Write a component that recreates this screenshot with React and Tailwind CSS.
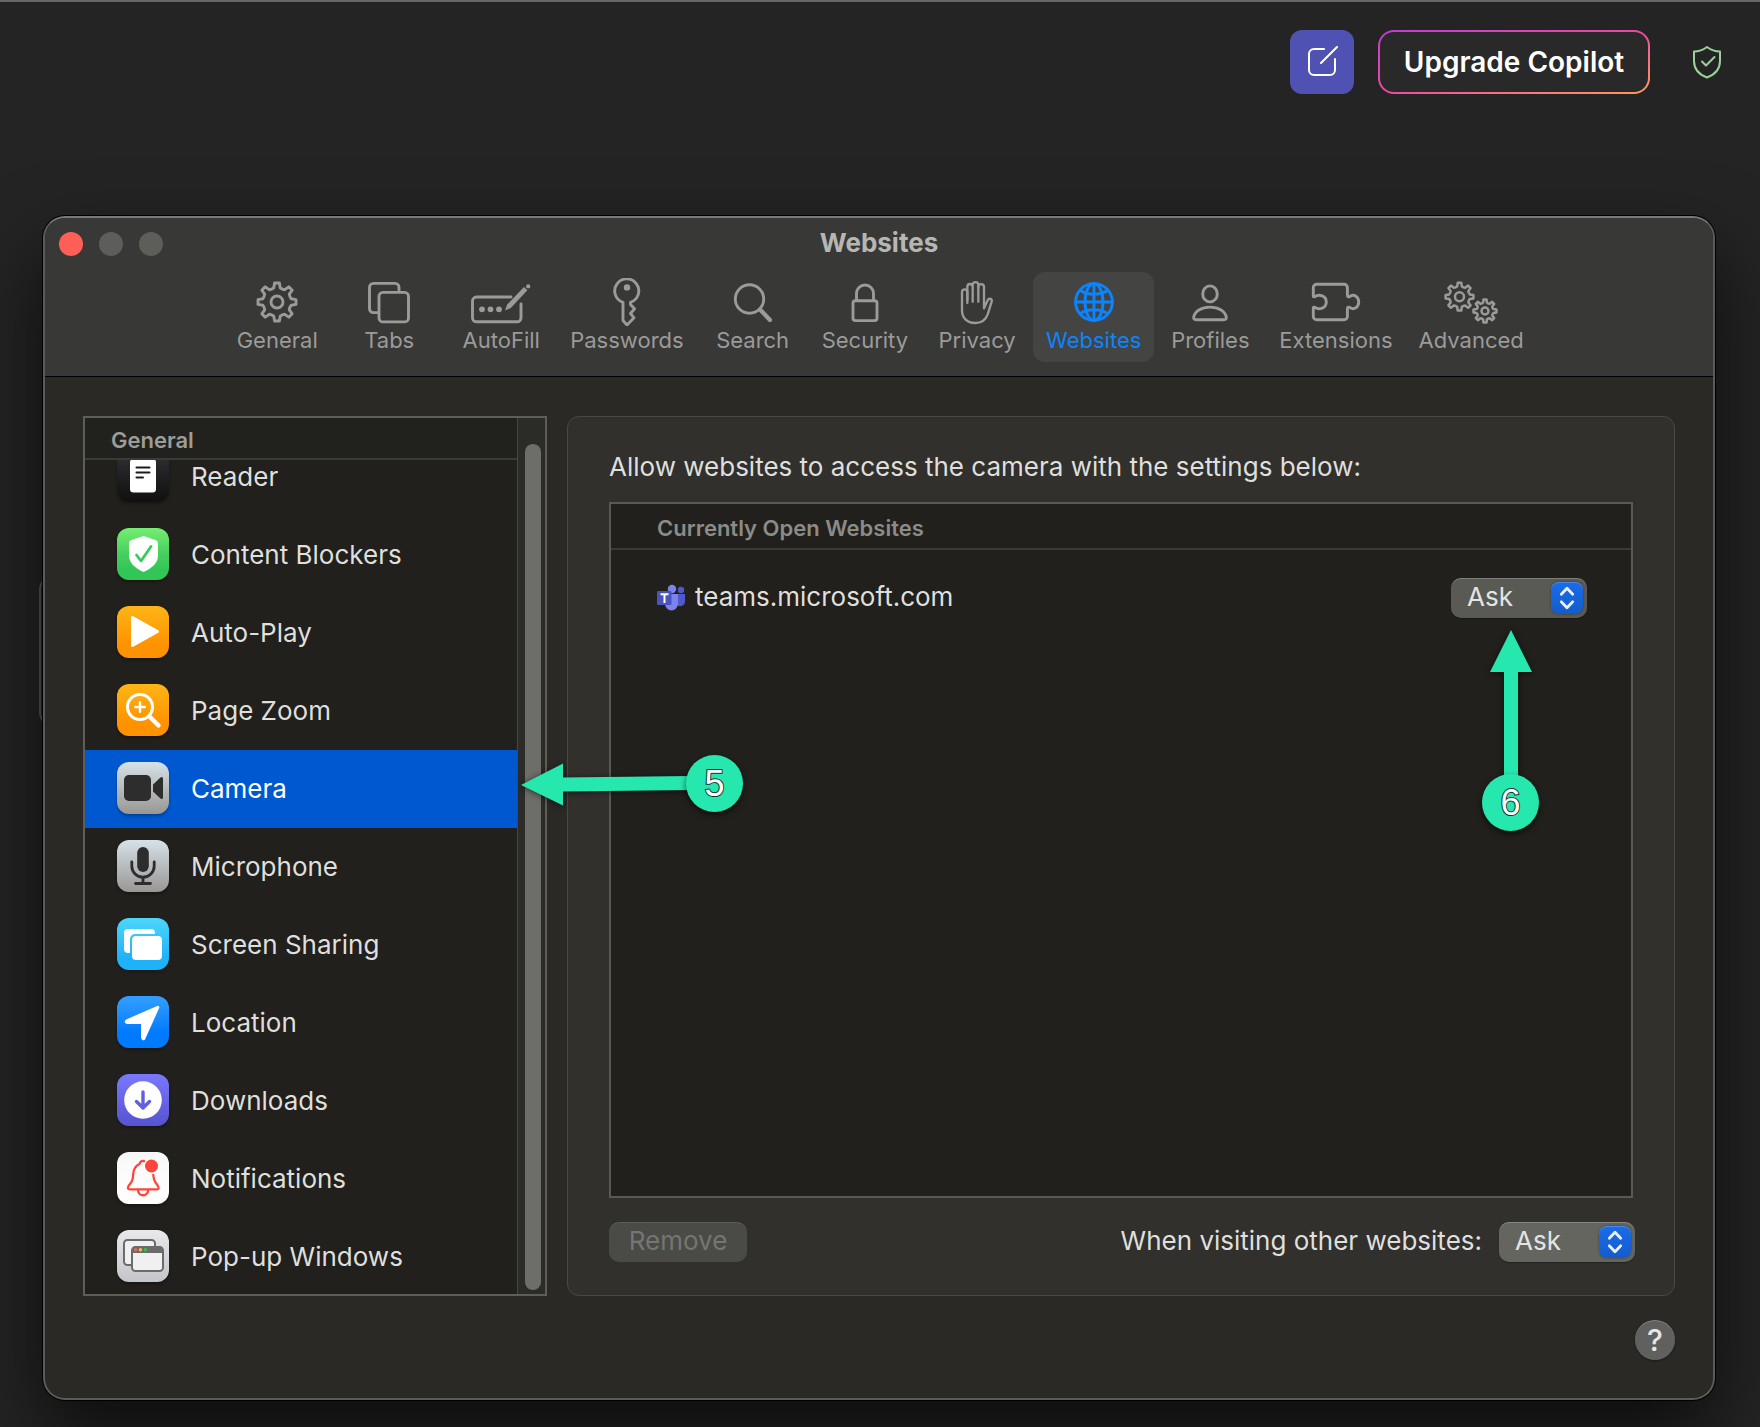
import { useState } from "react";

// outline of a cog centred on cx, cy
const cog = (cx, cy, outer, inner, teeth) => {
  const step = (Math.PI * 2) / teeth;
  const at = (r, a) => `${(cx + r * Math.sin(a)).toFixed(1)} ${(cy - r * Math.cos(a)).toFixed(1)}`;
  let d = "";

  for (let i = 0; i < teeth; i++) {
    const a = i * step;
    d += `${i ? "L" : "M"}${at(outer, a - step * 0.16)}L${at(outer, a + step * 0.16)}`;
    d += `L${at(inner, a + step * 0.28)}Q${at(inner - 1, a + step * 0.5)} ${at(inner, a + step * 0.72)}`;
  }
  return d + "Z";
};

const Line = ({ width, children }) => (
  <svg
    width={width}
    height="48"
    viewBox={`0 0 ${width} 48`}
    fill="none"
    stroke="currentColor"
    strokeWidth="2.9"
    strokeLinecap="round"
    strokeLinejoin="round"
    aria-hidden="true"
  >
    {children}
  </svg>
);

const tools = [
  {
    name: "General",
    icon: (
      <Line width={44}>
        <path d={cog(22, 24, 19.2, 14.6, 8)} />
        <circle cx="22" cy="24" r="6" />
      </Line>
    ),
  },
  {
    name: "Tabs",
    icon: (
      <Line width={42}>
        <path d="M9.5 34.6H5.5a4 4 0 0 1-4-4V9.4a4 4 0 0 1 4-4h21.5a4 4 0 0 1 4 4v3" />
        <rect x="11" y="14.4" width="29.5" height="29.5" rx="4" />
      </Line>
    ),
  },
  {
    name: "AutoFill",
    icon: (
      <Line width={60}>
        <path d="M40 19H5.5a4 4 0 0 0-4 4v16.800a4 4 0 0 0 4 4h40.500a4 4 0 0 0 4-4V26" />
        <path d="M34 32.500l2.200-6L53 9l3.400 3.200L39.800 30Z" fill="currentColor" stroke="none" />
        <circle cx="57.200" cy="8.400" r="2.100" fill="currentColor" stroke="none" />
        <g fill="currentColor" stroke="none">
          <circle cx="11" cy="31.300" r="2.900" />
          <circle cx="19.500" cy="31.300" r="2.900" />
          <circle cx="28" cy="31.300" r="2.900" />
        </g>
      </Line>
    ),
  },
  {
    name: "Passwords",
    icon: (
      <Line width={28}>
        <path d="M10 24.300A12 12 0 1 1 17.500 24.300V26.500l4 4.300-4 4.700 3.500 4.300-7 7.200-4-4.500Z" />
        <circle cx="14" cy="9.400" r="3.200" fill="currentColor" stroke="none" />
      </Line>
    ),
  },
  {
    name: "Search",
    icon: (
      <Line width={40}>
        <circle cx="16.500" cy="21" r="14.200" />
        <path d="M27 31.500L37 42" strokeWidth="4.200" />
      </Line>
    ),
  },
  {
    name: "Security",
    icon: (
      <Line width={28}>
        <rect x="2" y="22.800" width="24" height="19.800" rx="2.500" />
        <path d="M5.500 22.500V15.500a8.500 8.500 0 0 1 17 0v7" />
      </Line>
    ),
  },
  {
    name: "Privacy",
    icon: (
      <svg
        width="34"
        height="48"
        viewBox="1203 234 102 144"
        fill="none"
        stroke="currentColor"
        strokeWidth="7"
        strokeLinecap="round"
        strokeLinejoin="round"
        aria-hidden="true"
      >
        <path d="M1225 309V276a8 8 0 0 0-16 0v55c0 24 16 38 39 38 20 0 32-9 38-26l12-38c3-9-8-12-12-4l-11 24V261a8.500 8.500 0 0 0-17 0" />
        <path d="M1225 300V260a8 8 0 0 1 16 0v45M1241 258v-3a8.500 8.500 0 0 1 17 0v50" />
      </svg>
    ),
  },
  {
    name: "Websites",
    icon: (
      <Line width={42}>
        <circle cx="21" cy="24" r="18.400" />
        <ellipse cx="21" cy="24" rx="9" ry="18.400" />
        <path d="M21 5.400v37.200M2.400 24h37.200M7.500 12.500c7 5 20 5 27 0M7.500 35.500c7-5 20-5 27 0" />
      </Line>
    ),
  },
  {
    name: "Profiles",
    icon: (
      <Line width={36}>
        <ellipse cx="18" cy="15.900" rx="7.300" ry="8" />
        <path d="M4 41.800c-1.600 0-2.500-1-2.300-2.500C2.700 33.500 9 29.100 18 29.100s15.300 4.400 16.300 10.200c.2 1.500-.7 2.500-2.300 2.500Z" />
      </Line>
    ),
  },
  {
    name: "Extensions",
    icon: (
      <Line width={50}>
        <path d="M2.300 18.500V9.500a3.300 3.300 0 0 1 3.300-3.300h27.500a3.300 3.300 0 0 1 3.300 3.300v7.800c0 1.600 1.400 2 2.500 1.200 4.200-2.900 8.800.3 8.800 5.500s-4.600 8.400-8.800 5.500c-1.100-.8-2.500-.4-2.500 1.200v7.800a3.300 3.300 0 0 1-3.300 3.300H5.600a3.300 3.300 0 0 1-3.300-3.300V29.500l1.300-.3c4.700 3.200 11.700.8 11.700-5.200s-7-8.400-11.700-5.200Z" />
      </Line>
    ),
  },
  {
    name: "Advanced",
    icon: (
      <Line width={56}>
        <g strokeWidth="2.500">
          <path d={cog(16.5, 18.7, 14, 10.6, 8)} />
          <circle cx="16.500" cy="18.700" r="4.500" />
          <path d={cog(42, 33, 11.6, 8.7, 8)} />
          <circle cx="42" cy="33" r="3.500" />
        </g>
      </Line>
    ),
  },
];

const sections = [
  {
    name: "Reader",
    tile: "from-[#323234] to-[#101011]",
    icon: (
      <>
        <rect x="13" y="9" width="26" height="33.500" rx="3.500" fill="#fff" />
        <path d="M19.500 17.500h13M19.500 22.500h13M19.500 27.500h6.500" stroke="#1c1c1e" strokeWidth="2" />
      </>
    ),
  },
  {
    name: "Content Blockers",
    tile: "from-[#75ed72] from-0% via-[#45cf5f] via-50% to-[#32c657] to-80%",
    icon: (
      <>
        <path d="M26.500 8L38.500 12q2.500 1 2.500 3v12.500c0 7-5.500 12.500-14.500 16.500C17.500 40 12 34.500 12 27.500V15q0-2 2.500-3Z" fill="#fff" />
        <path d="M19.500 27l4.500 6L34 18.500" stroke="#3ccb5b" strokeWidth="2.800" />
      </>
    ),
  },
  {
    name: "Auto-Play",
    tile: "from-[#fdb515] to-[#ff9200] to-75%",
    icon: <path d="M15.500 11.500v28L40.500 25.500Z" fill="#fff" stroke="#fff" strokeWidth="3" />,
  },
  {
    name: "Page Zoom",
    tile: "from-[#fdb515] to-[#ff9200] to-75%",
    icon: (
      <g stroke="#fff" strokeWidth="3">
        <circle cx="23" cy="23" r="12.500" />
        <path d="M33 33l8.500 8.500" strokeWidth="4.400" />
        <path d="M18.300 23h9.400M23 18.300v9.400" strokeWidth="2.400" />
      </g>
    ),
  },
  {
    name: "Camera",
    tile: "from-[#d6e2e8] to-[#999795]",
    icon: (
      <g fill="#2d2d2d">
        <rect x="7" y="13" width="27" height="26" rx="5" />
        <path d="M36 22.500l7.500-7q2.500-1.500 2.500 1.500v18q0 3-2.500 1.500l-7.500-7Z" />
      </g>
    ),
  },
  {
    name: "Microphone",
    tile: "from-[#d6e2e8] to-[#999795]",
    icon: (
      <>
        <rect x="20.200" y="7" width="11.600" height="25" rx="5.800" fill="#2d2d2d" />
        <path d="M14.800 22v4a11.200 11.200 0 0 0 22.400 0v-4M26 37.500v6M18.500 43.500h15" stroke="#2d2d2d" strokeWidth="2.800" />
      </>
    ),
  },
  {
    name: "Screen Sharing",
    tile: "from-[#4cd6fb] to-[#1eb2f8] to-75%",
    icon: (
      <>
        <path d="M13 35h-2a4 4 0 0 1-4-4V15a4 4 0 0 1 4-4h23a4 4 0 0 1 4 4v1H18a5 5 0 0 0-5 5Z" fill="#fff" />
        <rect x="15" y="18" width="30" height="24" rx="4" fill="#fff" />
      </>
    ),
  },
  {
    name: "Location",
    tile: "from-[#329fff] to-[#007aff] to-70%",
    icon: <path d="M40.800 11.300L27 42.200q-1.200 1.500-1.500-.8V26.500H10.600q-2.300-.5-.8-1.700Z" fill="#fff" stroke="#fff" strokeWidth="3" />,
  },
  {
    name: "Downloads",
    tile: "from-[#7a78fd] to-[#5553d0]",
    icon: (
      <>
        <circle cx="26" cy="26" r="18.800" fill="#fff" />
        <path d="M26 18v15M19.500 27.500l6.500 6.500 6.500-6.500" stroke="#625fe0" strokeWidth="3.400" />
      </>
    ),
  },
  {
    name: "Notifications",
    tile: "from-[#f8f8f9] to-[#ffffff]",
    icon: (
      <>
        <path
          d="M27 9q-3.500-.5-4.500 3C18 14 16.500 17 16.200 22c-.3 6-1 7.500-4 11-2.200 2.700-1.600 4.300.8 4.300h26.500c2.400 0 3-1.600.8-4.300-3-3.500-3.700-5.200-4-10"
          stroke="#ff453a"
          strokeWidth="2.300"
        />
        <path d="M21 38c.3 7 9.900 7 10.200 0" stroke="#ff453a" strokeWidth="2.300" />
        <circle cx="34.500" cy="14" r="6.500" fill="#ff453a" />
      </>
    ),
  },
  {
    name: "Pop-up Windows",
    tile: "from-[#e9e9ec] to-[#c4c4ca]",
    icon: (
      <>
        <rect x="7" y="10" width="31" height="25" rx="3.500" fill="#f0f0f0" stroke="#6b6b6b" strokeWidth="2" />
        <rect x="15" y="17" width="31" height="24" rx="3.500" fill="#f0f0f0" stroke="#6b6b6b" strokeWidth="2" />
        <path d="M15 23v-3a3.500 3.500 0 0 1 3.500-3.500h24A3.500 3.500 0 0 1 46 20v3Z" fill="#6b6b6b" />
        <circle cx="18.700" cy="19.700" r="1.700" fill="#f65f57" />
        <circle cx="23.500" cy="19.700" r="1.700" fill="#fbbd2e" />
        <circle cx="28.400" cy="19.700" r="1.700" fill="#2bc840" />
      </>
    ),
  },
];

const PolicySelect = ({ id, label, className }) => (
  <span className="relative inline-flex">
    <select
      id={id}
      aria-label={label}
      className={`h-10 w-[136px] appearance-none rounded-[10px] pb-0.5 pl-4 text-[26px] leading-8 text-[#e4e4e2] shadow-[inset_0_1px_0_rgba(255,255,255,0.22),0_1px_1px_rgba(0,0,0,0.3)] focus:outline-none ${className}`}
    >
      <option>Ask</option>
      <option>Deny</option>
      <option>Allow</option>
    </select>
    <span className="pointer-events-none absolute top-1 right-1 grid size-8 place-items-center rounded-lg bg-linear-to-b from-[#1a6cea] to-[#145cca] shadow-[0_0_2px_rgba(0,0,0,0.5),inset_0_1px_0_rgba(255,255,255,0.2)]">
      <svg width="16" height="24" viewBox="0 0 16 24" fill="none" stroke="#e8f0fd" strokeWidth="2.800" strokeLinecap="round" strokeLinejoin="round" aria-hidden="true">
        <path d="M2.300 8.300L8 2.300l5.700 6M2.300 15.700L8 21.700l5.700-6" />
      </svg>
    </span>
  </span>
);

const StepBadge = ({ children, className }) => (
  <span
    className={`absolute grid size-[57px] place-items-center rounded-full bg-[#26e8ae] font-['Liberation_Sans',sans-serif] text-[36px] leading-none text-white shadow-[0_3px_6px_rgba(0,0,0,0.6)] [paint-order:stroke_fill] [-webkit-text-stroke:2px_#10362c] ${className}`}
  >
    {children}
  </span>
);

const App = () => {
  const [tool, setTool] = useState("Websites");
  const [section, setSection] = useState("Camera");

  return (
    <div className="relative isolate min-h-screen overflow-hidden border-t-2 border-[#666666] bg-[#242424] font-['Inter',sans-serif] text-[#dfdfdd]">

      <header className="flex items-center justify-end gap-6 pt-7 pr-[38px]">
        <button aria-label="New message" className="grid size-16 place-items-center rounded-xl bg-[#4f52b2]">
          <svg width="32" height="32" viewBox="0 0 32 32" fill="none" stroke="#fff" strokeWidth="2" strokeLinecap="round" aria-hidden="true">
            <path d="M18 3H8a5 5 0 0 0-5 5v16a5 5 0 0 0 5 5h16a5 5 0 0 0 5-5V13M15 17L31 1" />
          </svg>
        </button>
        <div className="rounded-2xl bg-linear-to-br from-[#c239d8] via-[#f0479f] to-[#ff9a52] p-0.5">
          <button className="h-[60px] w-[268px] rounded-[14px] bg-[#292929] text-[28px] leading-8 font-semibold text-white">
            Upgrade Copilot
          </button>
        </div>
        <button aria-label="Security status" className="ml-[18px]">
          <svg width="30" height="34" viewBox="0 0 30 34" fill="none" stroke="#9ad29a" strokeWidth="2" strokeLinecap="round" strokeLinejoin="round" aria-hidden="true">
            <path d="M15 2c4 3 8 4.500 13 4.500V16c0 8.500-5 13.500-13 16.500C7 29.500 2 24.500 2 16V6.500C7 6.500 11 5 15 2Z" />
            <path d="M10 16.500l4 4 8.500-8.500" />
          </svg>
        </button>
      </header>

      {/* message box of the page behind the window */}
      <div className="absolute top-[572px] left-[39px] -z-10 h-[154px] w-40 rounded-2xl border-2 border-[#555555]" />

      <main className="mt-[122px] mr-[45px] mb-[27px] ml-[43px] overflow-hidden rounded-[22px] border-2 border-[#5b5b57] border-t-[#787876] bg-[#2a2925] shadow-[0_0_0_1px_#000,0_36px_80px_rgba(0,0,0,0.65)]">

        <div className="border-b border-black bg-[#383836] pb-3.5">
          <div className="grid h-[54px] grid-cols-3 items-center px-3.5 pb-0.5">
            <div className="flex gap-4">
              <button aria-label="Close" className="size-6 rounded-full bg-[#ff5f57]" />
              <button aria-label="Minimise" className="size-6 rounded-full bg-[#5d5e59]" />
              <button aria-label="Zoom" className="size-6 rounded-full bg-[#5d5e59]" />
            </div>
            <h1 className="pb-0.5 text-center text-[26px] leading-8 font-bold text-[#b6b6b3]">Websites</h1>
          </div>

          <nav className="flex justify-center" aria-label="Settings">
            {tools.map(({ name, icon }) => (
              <button
                key={name}
                onClick={() => setTool(name)}
                className={`flex h-[90px] min-w-28 flex-col items-center rounded-xl px-[13px] pt-1.5 text-[22px] leading-7 ${
                  tool === name ? "bg-[#444442] text-[#0a84ff]" : "text-[#9b9b99]"
                }`}
              >
                {icon}
                {name}
              </button>
            ))}
          </nav>
        </div>

        <div className="relative px-[38px] pt-[39px] pb-[38px]">
          <div className="flex gap-5">

            <aside className="flex w-[464px] shrink-0 overflow-hidden border-2 border-[#5e5e59] bg-[#21201c]">
              <div className="flex-1">
                <h2 className="h-[42px] border-b-2 border-[#3a3a36] bg-[#21211d] pt-0.5 pl-[26px] text-[22px] leading-10 font-semibold text-[#9c9c99]">General</h2>
                <ul className="-mb-0.5 overflow-hidden">
                  {sections.map(({ name, tile, icon }) => (
                    <li key={name} className="first:-mt-[22px]">
                      <button
                        onClick={() => setSection(name)}
                        className={`flex h-[78px] w-full items-center gap-[22px] pl-8 text-left text-[26px] leading-8 ${
                          section === name ? "bg-[#0058d0] text-white" : ""
                        }`}
                      >
                        <span className={`mb-0.5 size-[52px] rounded-xl bg-linear-to-b shadow-[0_2px_3px_rgba(0,0,0,0.3)] ${tile}`}>
                          <svg viewBox="0 0 52 52" fill="none" strokeLinecap="round" strokeLinejoin="round" aria-hidden="true">
                            {icon}
                          </svg>
                        </span>
                        {name}
                      </button>
                    </li>
                  ))}
                </ul>
              </div>
              <div className="flex w-7 border-l border-[#454541] bg-[#2b2b27] pt-[26px] pr-1 pb-1 pl-[7px]">
                <div className="w-4 flex-1 rounded-full bg-[#6d6e69]" />
              </div>
            </aside>

            <section className="flex min-w-0 flex-1 flex-col rounded-xl border border-[#4a4a45] bg-[#31302c] px-[41px] pt-[34px] pb-[33px]">
              <p className="text-[26px] leading-8">Allow websites to access the camera with the settings below:</p>

              <div className="mt-[19px] flex-1 border-2 border-[#595955] bg-[#21201c]">
                <table className="w-full text-left">
                  <thead>
                    <tr className="h-[45px] border-b-2 border-[#3a3a36]">
                      <th colSpan={2} className="pt-1 pl-[46px] text-[22px] leading-7 font-semibold text-[#8b8b88]">Currently Open Websites</th>
                    </tr>
                  </thead>
                  <tbody>
                    <tr className="h-24">
                      <td className="pl-[46px] text-[26px] leading-8">
                        <span className="flex items-center gap-2.5">
                          <svg width="28" height="28" viewBox="0 0 28 28" aria-hidden="true">
                            <circle cx="24" cy="6" r="3.200" fill="#5059c9" />
                            <path d="M19 10h9v8a5 5 0 0 1-9 2Z" fill="#5059c9" />
                            <circle cx="15" cy="5" r="4.200" fill="#7b83eb" />
                            <path d="M8 10h13v10a6.500 6.500 0 0 1-13 0Z" fill="#7b83eb" />
                            <rect y="7" width="14.500" height="14" rx="1" fill="#4b53bc" />
                            <path d="M3.500 10.300h8M7.500 10.300V19" stroke="#fff" strokeWidth="2" />
                          </svg>
                          <span className="pb-0.5">teams.microsoft.com</span>
                        </span>
                      </td>
                      <td className="pr-11">
                        <span className="flex justify-end">
                          <PolicySelect label="Camera access for teams.microsoft.com" className="bg-[#5a5a55]" />
                        </span>
                      </td>
                    </tr>
                  </tbody>
                </table>
              </div>

              <div className="-mr-0.5 mt-6 flex items-center">
                <button disabled className="h-10 w-[138px] rounded-[10px] bg-[#4a4a46] pb-0.5 text-[26px] leading-8 text-[#757571] shadow-[inset_0_1px_0_rgba(255,255,255,0.1)]">
                  Remove
                </button>
                <label htmlFor="default-policy" className="mr-[17px] ml-auto pb-0.5 text-[26px] leading-8">
                  When visiting other websites:
                </label>
                <PolicySelect id="default-policy" className="bg-[#656560]" />
              </div>
            </section>
          </div>

          <div className="mt-6 flex justify-end">
            <button aria-label="Help" className="size-10 rounded-full bg-[#60605e] text-[30px] leading-10 font-medium text-[#e6e6e4] shadow-[inset_0_1px_0_rgba(255,255,255,0.22),0_1px_2px_rgba(0,0,0,0.4)]">
              ?
            </button>
          </div>

          {/* numbered steps */}
          <div className="absolute top-[378px] left-[476px] h-[57px] w-[222px]">
            <svg width="180" height="57" viewBox="0 0 180 57" className="drop-shadow-[0_1px_3px_rgba(0,0,0,0.6)]" aria-hidden="true">
              <path d="M0 30L42 8.500V22.500L170 21V35L42 36.500V50.500Z" fill="#26e8ae" />
            </svg>
            <StepBadge className="top-0 right-0">5</StepBadge>
          </div>
          <div className="absolute top-[253px] right-[174px] h-[201px] w-[57px]">
            <svg width="57" height="170" viewBox="0 0 57 170" className="drop-shadow-[0_1px_3px_rgba(0,0,0,0.6)]" aria-hidden="true">
              <path d="M29 0L50 42H36V160H22V42H8Z" fill="#26e8ae" />
            </svg>
            <StepBadge className="bottom-0 left-0">6</StepBadge>
          </div>
        </div>
      </main>
    </div>
  );
};

export default App;
